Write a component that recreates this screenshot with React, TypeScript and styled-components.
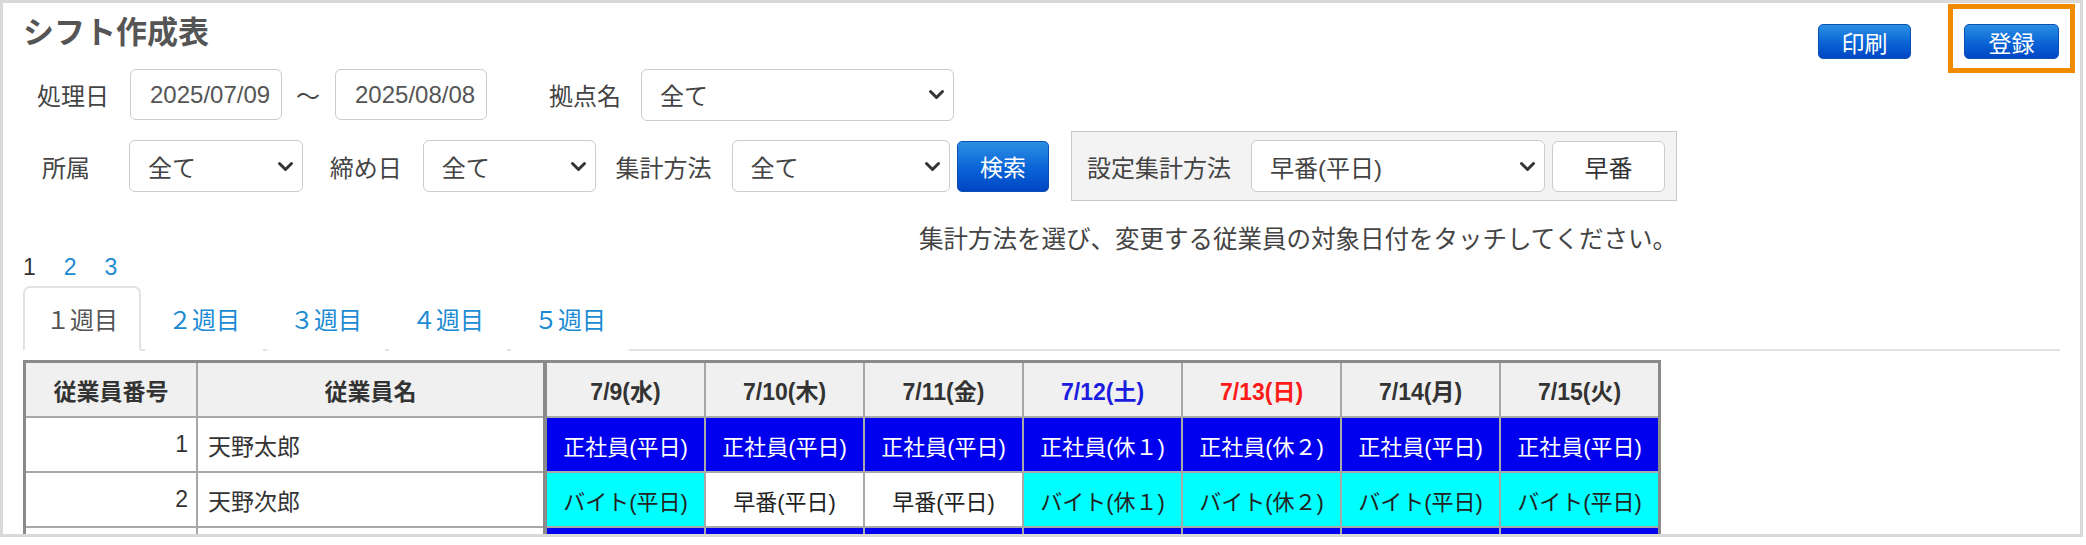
import React from "react";
import styled, { createGlobalStyle } from "styled-components";

const GlobalStyle = createGlobalStyle`
    html, body {
        margin : 0;
        padding : 0;
        background : #ffffff;
    }
    body {
        font-family : "Liberation Sans", "Noto Sans CJK JP", sans-serif;
        color : #444;
    }
`;

const Frame = styled.div`
    box-sizing : border-box;
    width : 2083px;
    height : 537px;
    border : 3px solid #d9d9d9;
    padding : 1px 20px 0 20px;
    overflow : hidden;
`;

const HeaderRow = styled.div`
    display : flex;
    align-items : flex-start;
    justify-content : space-between;
    margin-bottom : -4px;
`;

const Title = styled.h1`
    margin : 13px 0 0 0;
    font-size : 31px;
    line-height : 1;
    font-weight : bold;
    color : #555;
`;

const HeaderButtons = styled.div`
    display : flex;
    align-items : flex-start;
    gap : 37px;
    margin-right : -15px;
`;

const Highlight = styled.div`
    border : 5px solid #f08a00;
    padding : 15px 11px 9px 11px;
`;

const BlueButton = styled.button<{ $w: number; $h: number }>`
    display : flex;
    align-items : center;
    justify-content : center;
    box-sizing : border-box;
    width : ${(p) => p.$w}px;
    height : ${(p) => p.$h}px;
    padding : 0;
    border : 1px solid #0b4fb3;
    border-radius : 5px;
    background : linear-gradient(#2b8fe3, #0a63d6 55%, #0046c4);
    color : #fff;
    font-family : inherit;
    font-size : 23px;
    cursor : pointer;
`;

const PrintButton = styled(BlueButton)`
    margin-top : 20px;
`;

const Filters = styled.div`
    width : 1654px;
`;

const FilterRow = styled.div<{ $h: number; $mt?: number }>`
    display : flex;
    align-items : center;
    height : ${(p) => p.$h}px;
    margin-top : ${(p) => p.$mt || 0}px;
`;

const Label = styled.span<{ $ml: number; $mr: number }>`
    margin-left : ${(p) => p.$ml}px;
    margin-right : ${(p) => p.$mr}px;
    font-size : 24px;
    color : #444;
    white-space : nowrap;
`;

const DateInput = styled.input`
    box-sizing : border-box;
    width : 152px;
    height : 51px;
    border : 1px solid #ccc;
    border-radius : 6px;
    padding : 0 0 0 19px;
    font-family : inherit;
    font-size : 24px;
    color : #555;
    outline : none;
`;

const Tilde = styled.span`
    margin : 0 15px 0 14px;
    font-size : 24px;
    color : #444;
`;

const SelectBox = styled.div<{ $w: number }>`
    box-sizing : border-box;
    display : flex;
    align-items : center;
    justify-content : space-between;
    width : ${(p) => p.$w}px;
    height : 52px;
    padding : 0 8px 0 18px;
    border : 1px solid #ccc;
    border-radius : 6px;
    background : #fff;
    font-size : 24px;
    color : #444;
`;

const SearchButton = styled(BlueButton)`
    margin-left : 7px;
`;

const SettingBox = styled.div`
    box-sizing : border-box;
    display : flex;
    align-items : center;
    height : 70px;
    margin-left : 22px;
    padding : 0 11px 0 15px;
    border : 1px solid #c8c8c8;
    background : #f3f3f3;
`;

const WhiteButton = styled.button`
    box-sizing : border-box;
    width : 113px;
    height : 51px;
    margin-left : 7px;
    border : 1px solid #ccc;
    border-radius : 6px;
    background : #fff;
    font-family : inherit;
    font-size : 24px;
    color : #333;
`;

const Notice = styled.div`
    margin-top : 23px;
    text-align : right;
    font-size : 24.5px;
    line-height : 32px;
    color : #444;
`;

const Pager = styled.div`
    display : flex;
    gap : 28px;
    margin-top : -1px;
    font-size : 23px;
    line-height : 24px;
`;

const PageLink = styled.span<{ $active?: boolean }>`
    color : ${(p) => (p.$active ? "#333" : "#1b8bd3")};
`;

const TabBar = styled.div`
    display : flex;
    margin-top : 7px;
    border-bottom : 2px solid #e2e2e2;
`;

const Tab = styled.div<{ $active?: boolean }>`
    box-sizing : border-box;
    height : 65px;
    margin-right : 4px;
    margin-bottom : -2px;
    padding : 0 21px;
    display : flex;
    align-items : center;
    font-size : 24px;
    color : ${(p) => (p.$active ? "#555" : "#1b8bd3")};
    border : 2px solid ${(p) => (p.$active ? "#e2e2e2" : "transparent")};
    border-bottom-color : ${(p) => (p.$active ? "#fff" : "transparent")};
    border-radius : 7px 7px 0 0;
    background : #fff;
`;

const Table = styled.table`
    margin-top : 9px;
    border-collapse : collapse;
    border : 3px solid #8a8a8a;
    table-layout : fixed;
`;

const Th = styled.th<{ $w: number; $color?: string; $split?: boolean }>`
    width : ${(p) => p.$w}px;
    height : 53px;
    padding : 0;
    background : #f0f0f0;
    border : 2px solid #a8a8a8;
    border-left : ${(p) => (p.$split ? "4px solid #8a8a8a" : "2px solid #a8a8a8")};
    font-size : 23px;
    font-weight : bold;
    color : ${(p) => p.$color || "#333"};
`;

const NumCell = styled.td`
    height : 53px;
    padding : 0 8px 0 0;
    border : 2px solid #a8a8a8;
    text-align : right;
    font-size : 23px;
    color : #333;
`;

const NameCell = styled.td`
    padding : 0 0 0 10px;
    border : 2px solid #a8a8a8;
    font-size : 23px;
    color : #333;
`;

type Kind = "staff" | "part" | "early";

const ShiftCell = styled.td<{ $kind: Kind; $split?: boolean }>`
    padding : 0;
    border : 2px solid #a8a8a8;
    border-left : ${(p) => (p.$split ? "4px solid #8a8a8a" : "2px solid #a8a8a8")};
    text-align : center;
    font-size : 22px;
    background : ${(p) =>
        p.$kind === "staff" ? "#0000ee" : p.$kind === "part" ? "#00ffff" : "#ffffff"};
    color : ${(p) => (p.$kind === "staff" ? "#ffffff" : "#222")};
`;

const Chevron = () => (
    <svg width="17" height="11" viewBox="0 0 17 11">
        <path d="M2.5 2.5 L8.5 8.5 L14.5 2.5" fill="none" stroke="#333" strokeWidth="3" strokeLinecap="round" strokeLinejoin="round" />
    </svg>
);

const Select = ({ w, value }: { w: number; value: string }) => (
    <SelectBox $w={w}>
        <span>{value}</span>
        <Chevron />
    </SelectBox>
);

const days = [
    { label: "7/9(水)" },
    { label: "7/10(木)" },
    { label: "7/11(金)" },
    { label: "7/12(土)", color: "#1c1ce0" },
    { label: "7/13(日)", color: "#ff1a1a" },
    { label: "7/14(月)" },
    { label: "7/15(火)" },
];

const rows: { no: string; name: string; shifts: [Kind, string][] }[] = [
    {
        no: "1",
        name: "天野太郎",
        shifts: [
            ["staff", "正社員(平日)"],
            ["staff", "正社員(平日)"],
            ["staff", "正社員(平日)"],
            ["staff", "正社員(休１)"],
            ["staff", "正社員(休２)"],
            ["staff", "正社員(平日)"],
            ["staff", "正社員(平日)"],
        ],
    },
    {
        no: "2",
        name: "天野次郎",
        shifts: [
            ["part", "バイト(平日)"],
            ["early", "早番(平日)"],
            ["early", "早番(平日)"],
            ["part", "バイト(休１)"],
            ["part", "バイト(休２)"],
            ["part", "バイト(平日)"],
            ["part", "バイト(平日)"],
        ],
    },
    {
        no: "",
        name: "",
        shifts: [
            ["staff", ""],
            ["staff", ""],
            ["staff", ""],
            ["staff", ""],
            ["staff", ""],
            ["staff", ""],
            ["staff", ""],
        ],
    },
];

const App = () => {
    return (
        <>
            <GlobalStyle />
            <Frame>
                <HeaderRow>
                    <Title>シフト作成表</Title>
                    <HeaderButtons>
                        <PrintButton $w={93} $h={35}>印刷</PrintButton>
                        <Highlight>
                            <BlueButton $w={95} $h={35}>登録</BlueButton>
                        </Highlight>
                    </HeaderButtons>
                </HeaderRow>

                <Filters>
                    <FilterRow $h={51}>
                        <Label $ml={14} $mr={21}>処理日</Label>
                        <DateInput readOnly value="2025/07/09" />
                        <Tilde>〜</Tilde>
                        <DateInput readOnly value="2025/08/08" />
                        <Label $ml={62} $mr={20}>拠点名</Label>
                        <Select w={313} value="全て" />
                    </FilterRow>
                    <FilterRow $h={70} $mt={11}>
                        <Label $ml={19} $mr={39}>所属</Label>
                        <Select w={174} value="全て" />
                        <Label $ml={27} $mr={21}>締め日</Label>
                        <Select w={173} value="全て" />
                        <Label $ml={20} $mr={20}>集計方法</Label>
                        <Select w={219} value="全て" />
                        <SearchButton $w={92} $h={51}>検索</SearchButton>
                        <SettingBox>
                            <Label $ml={0} $mr={20}>設定集計方法</Label>
                            <Select w={294} value="早番(平日)" />
                            <WhiteButton>早番</WhiteButton>
                        </SettingBox>
                    </FilterRow>
                    <Notice>集計方法を選び、変更する従業員の対象日付をタッチしてください。</Notice>
                </Filters>

                <Pager>
                    <PageLink $active>1</PageLink>
                    <PageLink>2</PageLink>
                    <PageLink>3</PageLink>
                </Pager>

                <TabBar>
                    <Tab $active>１週目</Tab>
                    <Tab>２週目</Tab>
                    <Tab>３週目</Tab>
                    <Tab>４週目</Tab>
                    <Tab>５週目</Tab>
                </TabBar>

                <Table>
                    <thead>
                        <tr>
                            <Th $w={170}>従業員番号</Th>
                            <Th $w={345}>従業員名</Th>
                            {days.map((d, i) => (
                                <Th key={d.label} $w={157} $color={d.color} $split={i === 0}>
                                    {d.label}
                                </Th>
                            ))}
                        </tr>
                    </thead>
                    <tbody>
                        {rows.map((r, ri) => (
                            <tr key={ri}>
                                <NumCell>{r.no}</NumCell>
                                <NameCell>{r.name}</NameCell>
                                {r.shifts.map(([kind, text], i) => (
                                    <ShiftCell key={i} $kind={kind} $split={i === 0}>
                                        {text}
                                    </ShiftCell>
                                ))}
                            </tr>
                        ))}
                    </tbody>
                </Table>
            </Frame>
        </>
    );
};

export default App;
